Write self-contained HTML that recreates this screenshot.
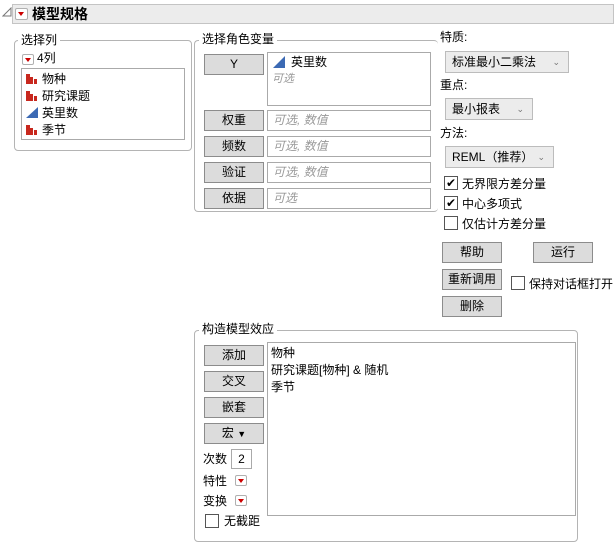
<!DOCTYPE html>
<html><head><meta charset="utf-8"><style>
*{box-sizing:border-box;margin:0;padding:0}
body{width:616px;height:543px;background:#fff;font-family:"Liberation Sans","Noto Sans CJK SC",sans-serif;font-size:12px;color:#000;position:relative;overflow:hidden}
.a{position:absolute}
.grp{position:absolute;border:1px solid #b4b4b4;border-radius:4px}
.lbl{position:absolute;background:#fff;padding:0 3px;font-size:12px;line-height:14px}
.btn{position:absolute;width:60px;height:21px;background:#dcdcdc;border:1px solid #8c8c8c;text-align:center;line-height:19px;font-size:12px}
.box{position:absolute;border:1px solid #aaa;background:#fff}
.ph{color:#999;font-style:italic;padding-left:5px;line-height:19px}
.dd{position:absolute;height:22px;background:#ececec;border:1px solid #bcbcbc;line-height:20px;padding-left:6px;font-size:12px}
.dd i{position:absolute;right:8px;top:0;font-style:normal;font-size:9px;color:#777}
.cb{position:absolute;width:14px;height:14px;border:1px solid #555;background:#fff;font-size:12px;line-height:12px;text-align:center}
.rd{position:absolute;width:12px;height:11px;border:1px solid #b0b0b0;border-radius:2px;background:#fff}
.rd:after{content:"";position:absolute;left:2px;top:3px;border-left:3px solid transparent;border-right:3px solid transparent;border-top:4px solid #c00}
</style></head><body>
<svg class="a" style="left:2px;top:7px" width="10" height="10"><polygon points="1,9 9,9 9,1" fill="none" stroke="#777"/></svg>
<div class="a" style="left:12px;top:4px;width:602px;height:20px;background:#ececec;border:1px solid #c4c4c4"></div>
<div class="rd" style="left:15px;top:8px;width:13px;height:12px"></div>
<div class="a" style="left:32px;top:5px;font-size:14px;font-weight:bold;line-height:18px">模型规格</div>

<div class="grp" style="left:14px;top:40px;width:178px;height:111px"></div>
<div class="lbl" style="left:18px;top:33px">选择列</div>
<div class="rd" style="left:22px;top:54px"></div>
<div class="a" style="left:37px;top:51px;line-height:14px">4列</div>
<div class="box" style="left:21px;top:68px;width:164px;height:72px"></div>
<div class="a" style="left:42px;top:71px;line-height:17px">物种<br>研究课题<br>英里数<br>季节</div>
<svg class="a" style="left:25px;top:72px" width="14" height="66">
<g fill="#c8281e"><rect x="1" y="2" width="4" height="10"/><rect x="5" y="5" width="3" height="7"/><rect x="9" y="7" width="3" height="5"/>
<rect x="1" y="19" width="4" height="10"/><rect x="5" y="22" width="3" height="7"/><rect x="9" y="24" width="3" height="5"/>
<rect x="1" y="53" width="4" height="10"/><rect x="5" y="56" width="3" height="7"/><rect x="9" y="58" width="3" height="5"/></g>
<polygon points="1,46 13,46 13,35" fill="#3c6ab4"/></svg>

<div class="grp" style="left:194px;top:40px;width:244px;height:172px;border-right:none"></div>
<div class="lbl" style="left:199px;top:32px">选择角色变量</div>
<div class="btn" style="left:204px;top:54px">Y</div>
<div class="box" style="left:267px;top:52px;width:164px;height:54px"></div>
<svg class="a" style="left:272px;top:55px" width="14" height="14"><polygon points="1,13 13,13 13,1" fill="#3c6ab4"/></svg>
<div class="a" style="left:291px;top:55px;line-height:15px">英里数</div>
<div class="a ph" style="left:268px;top:70px;padding-left:4px;font-size:11px">可选</div>
<div class="btn" style="left:204px;top:110px">权重</div><div class="box ph" style="left:267px;top:110px;width:164px;height:21px">可选, 数值</div>
<div class="btn" style="left:204px;top:136px">频数</div><div class="box ph" style="left:267px;top:136px;width:164px;height:21px">可选, 数值</div>
<div class="btn" style="left:204px;top:162px">验证</div><div class="box ph" style="left:267px;top:162px;width:164px;height:21px">可选, 数值</div>
<div class="btn" style="left:204px;top:188px">依据</div><div class="box ph" style="left:267px;top:188px;width:164px;height:21px">可选</div>

<div class="a" style="left:440px;top:30px;line-height:14px">特质:</div>
<div class="dd" style="left:445px;top:51px;width:124px">标准最小二乘法<i>⌄</i></div>
<div class="a" style="left:440px;top:78px;line-height:14px">重点:</div>
<div class="dd" style="left:445px;top:98px;width:88px">最小报表<i>⌄</i></div>
<div class="a" style="left:440px;top:126px;line-height:14px">方法:</div>
<div class="dd" style="left:445px;top:146px;width:109px">REML（推荐）<i>⌄</i></div>
<div class="cb" style="left:444px;top:176px">✔</div><div class="a" style="left:462px;top:175px">无界限方差分量</div>
<div class="cb" style="left:444px;top:196px">✔</div><div class="a" style="left:462px;top:195px">中心多项式</div>
<div class="cb" style="left:444px;top:216px"></div><div class="a" style="left:462px;top:215px">仅估计方差分量</div>
<div class="btn" style="left:442px;top:242px">帮助</div>
<div class="btn" style="left:533px;top:242px">运行</div>
<div class="btn" style="left:442px;top:269px">重新调用</div>
<div class="cb" style="left:511px;top:276px"></div><div class="a" style="left:529px;top:275px">保持对话框打开</div>
<div class="btn" style="left:442px;top:296px">删除</div>

<div class="grp" style="left:194px;top:330px;width:384px;height:212px"></div>
<div class="lbl" style="left:199px;top:322px">构造模型效应</div>
<div class="btn" style="left:204px;top:345px">添加</div>
<div class="btn" style="left:204px;top:371px">交叉</div>
<div class="btn" style="left:204px;top:397px">嵌套</div>
<div class="btn" style="left:204px;top:423px">宏 <span style="font-size:9px">▼</span></div>
<div class="box" style="left:267px;top:342px;width:309px;height:174px"></div>
<div class="a" style="left:271px;top:345px;line-height:17px">物种<br>研究课题[物种] &amp; 随机<br>季节</div>
<div class="a" style="left:203px;top:450px">次数</div>
<div class="box" style="left:231px;top:449px;width:21px;height:20px;text-align:center;line-height:18px">2</div>
<div class="a" style="left:203px;top:472px">特性</div><div class="rd" style="left:235px;top:475px"></div>
<div class="a" style="left:203px;top:492px">变换</div><div class="rd" style="left:235px;top:495px"></div>
<div class="cb" style="left:205px;top:514px"></div><div class="a" style="left:224px;top:512px">无截距</div>
</body></html>
